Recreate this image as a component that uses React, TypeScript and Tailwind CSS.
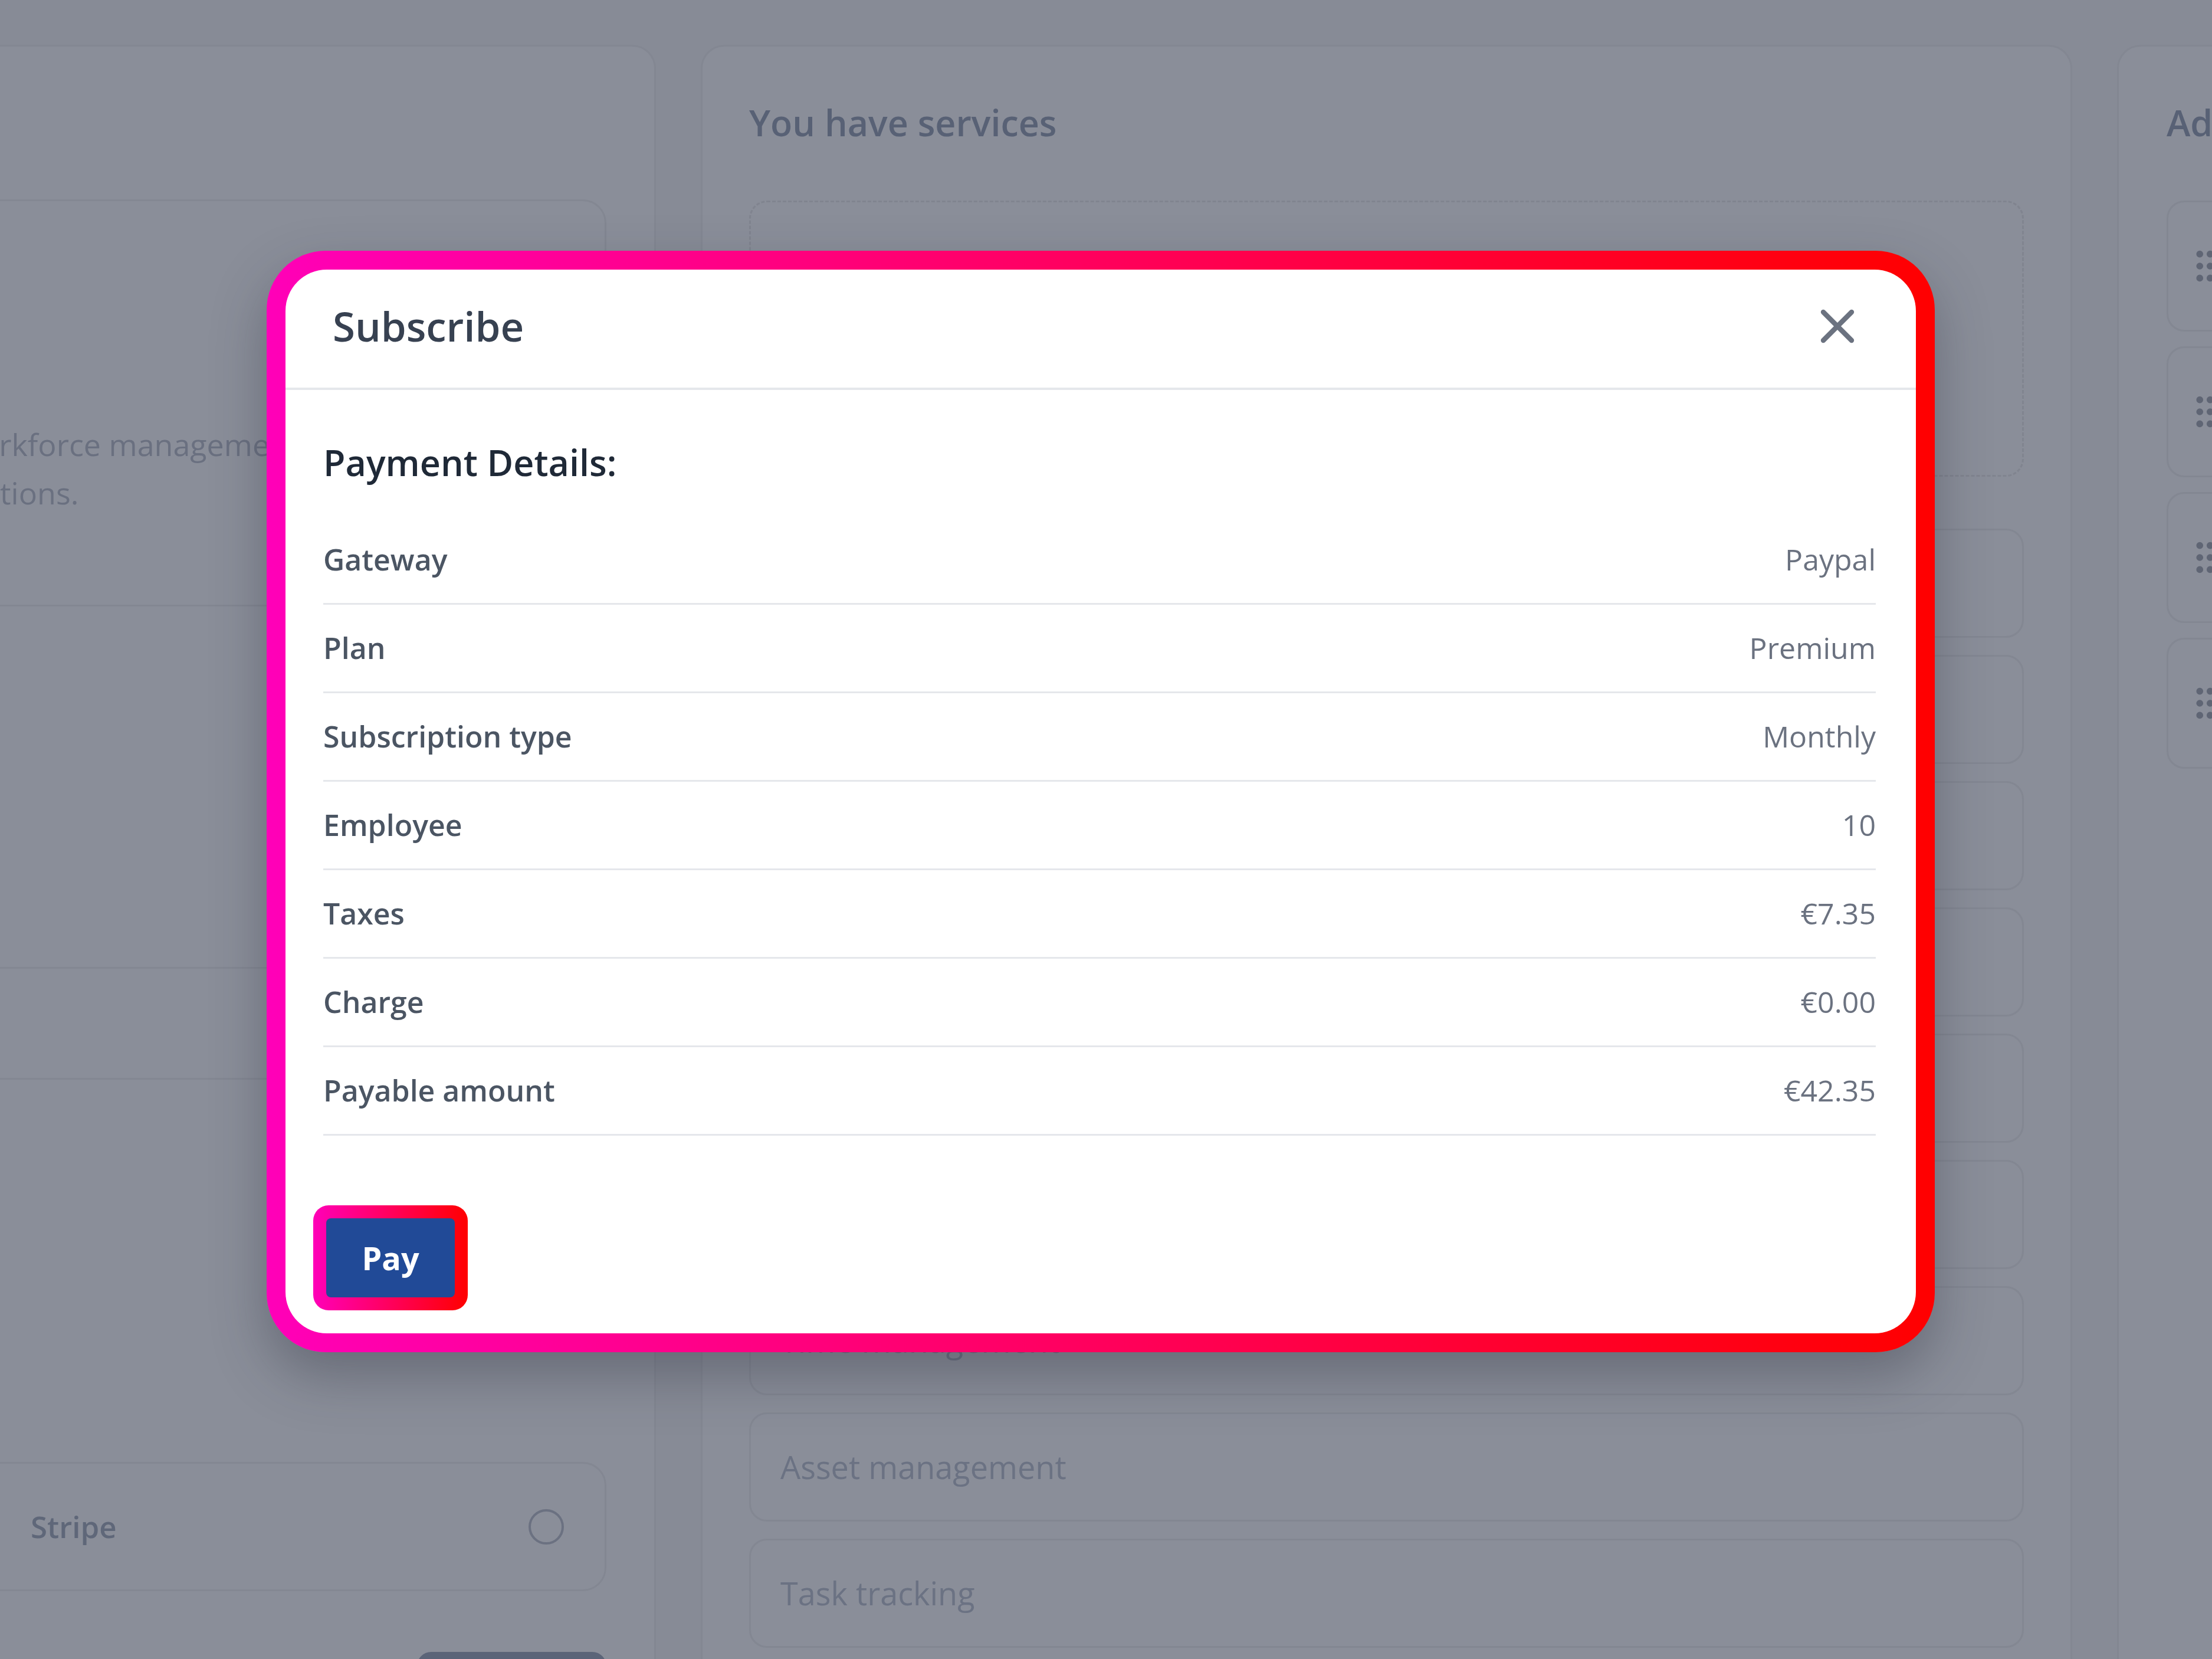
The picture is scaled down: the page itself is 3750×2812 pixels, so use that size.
import React from "react";

const rows: [string, string][] = [
  ["Gateway", "Paypal"],
  ["Plan", "Premium"],
  ["Subscription type", "Monthly"],
  ["Employee", "10"],
  ["Taxes", "€7.35"],
  ["Charge", "€0.00"],
  ["Payable amount", "€42.35"],
];

const services = [
  "Employee management",
  "Attendance tracking",
  "Payroll management",
  "Leave management",
  "Recruitment",
  "Performance reviews",
  "Time management",
  "Asset management",
  "Task tracking",
];

const extras = ["Reports", "Documents", "Announcements", "Expenses"];

function CloseIcon() {
  return (
    <svg
      width="96"
      height="96"
      viewBox="0 0 24 24"
      fill="none"
      stroke="#6b7280"
      strokeWidth="2.1"
      strokeLinecap="round"
      strokeLinejoin="round"
    >
      <path d="M18 6 6 18" />
      <path d="m6 6 12 12" />
    </svg>
  );
}

function Grip() {
  return (
    <svg
      width="70"
      height="70"
      viewBox="0 0 24 24"
      fill="none"
      stroke="#5f6574"
      strokeWidth="2"
      strokeLinecap="round"
      strokeLinejoin="round"
    >
      <circle cx="9" cy="12" r="1" />
      <circle cx="9" cy="5" r="1" />
      <circle cx="9" cy="19" r="1" />
      <circle cx="15" cy="12" r="1" />
      <circle cx="15" cy="5" r="1" />
      <circle cx="15" cy="19" r="1" />
    </svg>
  );
}

export default function App() {
  return (
    <div className="relative w-[3750px] h-[2812px] overflow-hidden bg-[#878b96] font-['Open_Sans',sans-serif]">
      {/* Dimmed page behind the dialog */}
      <div className="flex items-start gap-[76px] pt-[76px] ml-[-200px]">
        {/* Left column */}
        <div className="flex-none w-[1312px] h-[3000px] rounded-[40px] border-[3px] border-[#838792] bg-[#8a8e99] px-[81px] pt-[259px] flex flex-col">
          <div className="flex-none h-[690px] rounded-[40px] border-[3px] border-[#838792] pl-[12px] pt-[371px] overflow-hidden">
            <p className="whitespace-nowrap text-[52px] leading-[82px] text-[#6a7080]">
              <span className="block pl-[20px]">Workforce management for modern teams with flexible</span>
              <span className="block">solutions.</span>
            </p>
          </div>
          <div className="flex-none mt-[611px] h-[191px] border-y-[3px] border-[#838792]" />
          <div className="flex-none mt-[648px] h-[219px] rounded-[40px] border-[3px] border-[#838792] flex items-center justify-between pl-[165px] pr-[69px]">
            <span className="text-[51px] font-semibold text-[#5f6779]">Stripe</span>
            <span className="w-[60px] h-[60px] rounded-full border-[4px] border-[#6b7181]" />
          </div>
          <div className="flex-none mt-[103px] self-end w-[321px] h-[120px] rounded-[24px] bg-[#5b6478]" />
        </div>

        {/* Middle column */}
        <div className="flex-none w-[2325px] h-[3000px] rounded-[40px] border-[3px] border-[#838792] bg-[#8a8e99] px-[79px] pt-[89px] flex flex-col">
          <h2 className="flex-none text-[61px] leading-[80px] font-semibold text-[#586175]">You have services</h2>
          <div className="flex-none mt-[92px] h-[468px] rounded-[30px] border-[3px] border-dashed border-[#80848f]" />
          <div className="flex-none mt-[88px] flex flex-col gap-[29px]">
            {services.map((s) => (
              <div
                key={s}
                className="flex-none h-[185px] rounded-[30px] border-[3px] border-[#838792] flex items-center pl-[50px]"
              >
                <span className="text-[54px] text-[#6b7283]">{s}</span>
              </div>
            ))}
          </div>
        </div>

        {/* Right column */}
        <div className="flex-none w-[900px] h-[3000px] rounded-[40px] border-[3px] border-[#838792] bg-[#8a8e99] px-[81px] pt-[89px] flex flex-col">
          <h2 className="flex-none whitespace-nowrap text-[61px] leading-[80px] font-semibold text-[#586175]">Additional services</h2>
          <div className="flex-none mt-[92px] flex flex-col gap-[25px]">
            {extras.map((s) => (
              <div
                key={s}
                className="flex-none h-[222px] rounded-[30px] border-[3px] border-[#838792] flex items-center pl-[27px] gap-[30px]"
              >
                <Grip />
                <span className="text-[54px] text-[#6b7283]">{s}</span>
              </div>
            ))}
          </div>
        </div>
      </div>

      {/* Dialog overlay */}
      <div className="absolute inset-0">
        <div className="ml-[452px] mt-[425px] w-[2828px] h-[1867px] rounded-[100px] p-[32px] bg-[linear-gradient(to_right,#ff00b8,#ff0000)] shadow-[0_40px_90px_rgba(40,44,56,0.35)]">
          <div className="h-full rounded-[70px] bg-white flex flex-col overflow-hidden">
            <div className="h-[204px] flex-none flex items-center justify-between pl-[80px] pr-[85px] pb-[8px] border-b-[4px] border-[#e5e7eb]">
              <h3 className="text-[69px] font-semibold text-[#374151]">Subscribe</h3>
              <CloseIcon />
            </div>
            <div className="pl-[64px] pr-[68px] pt-[83px] flex flex-col">
              <h4 className="text-[61px] leading-[80px] font-semibold text-[#1f2937]">Payment Details:</h4>
              <div className="mt-[51px] flex flex-col">
                {rows.map(([label, value]) => (
                  <div
                    key={label}
                    className="h-[150px] flex items-center justify-between border-b-[3px] border-[#e5e7eb]"
                  >
                    <span className="text-[50px] font-semibold text-[#4b5563]">{label}</span>
                    <span className="text-[50px] text-[#6b7280]">{value}</span>
                  </div>
                ))}
              </div>
              <div className="mt-[118px] ml-[-17px] self-start rounded-[26px] p-[22px] bg-[linear-gradient(to_right,#ff00b8,#ff0000)]">
                <button className="w-[218px] h-[134px] rounded-[8px] bg-[#214a97] text-white text-[54px] font-bold flex items-center justify-center">
                  Pay
                </button>
              </div>
            </div>
          </div>
        </div>
      </div>
    </div>
  );
}
